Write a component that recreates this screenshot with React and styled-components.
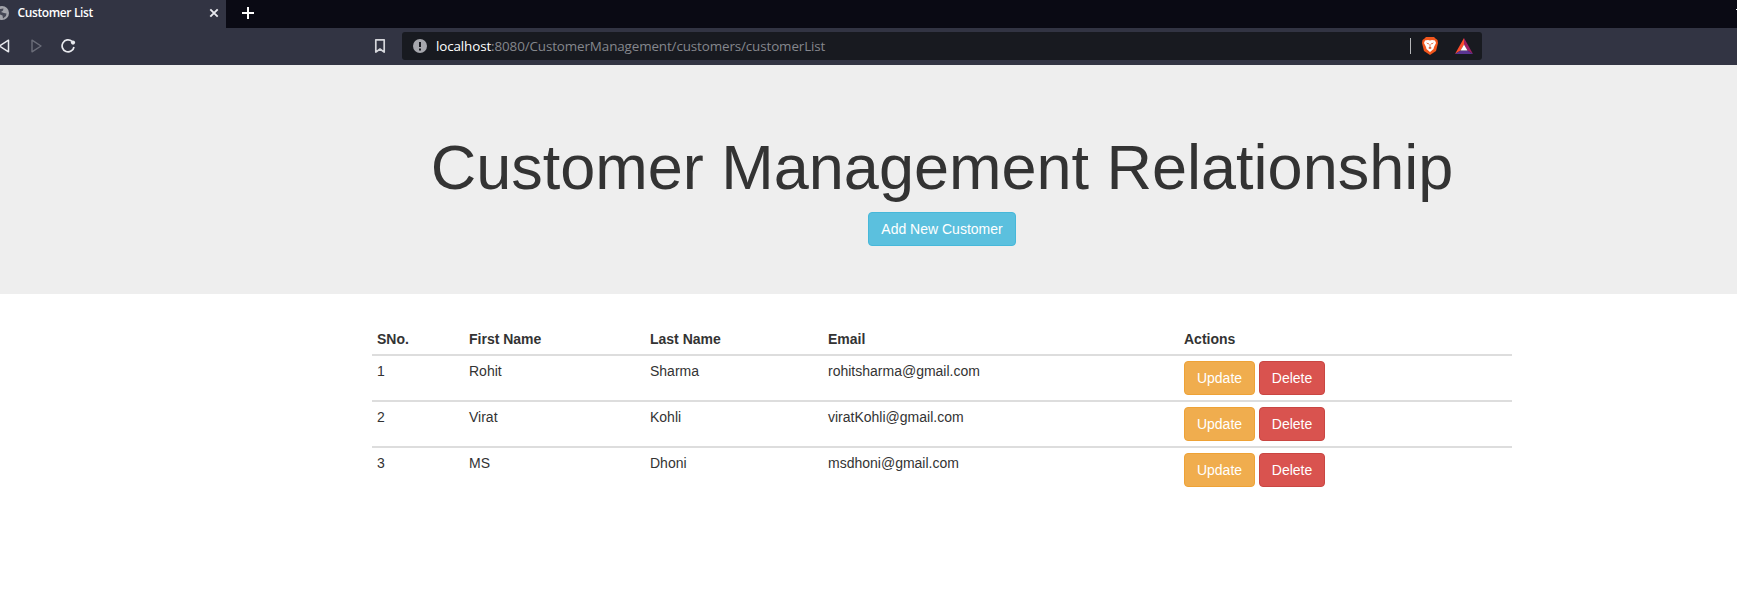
import React from "react";
import styled, { createGlobalStyle } from "styled-components";

const Global = createGlobalStyle`
  *, *::before, *::after { box-sizing: border-box; }
  body {
    margin: 0;
    background: #fff;
    color: #333;
    font: 14px/20px "Liberation Sans", Arial, sans-serif;
    overflow: hidden;
  }
`;

const Window = styled.div`
  height: 613px;
  overflow: hidden;
`;

const TabStrip = styled.div`
  display: flex;
  height: 28px;
  background: #0a0a14;
`;

const Tab = styled.div`
  display: flex;
  align-items: center;
  width: 226px;
  padding: 0 7px 2px 0;
  background: #323443;
  color: #fff;
  font: 600 12px/16px "Open Sans", "Noto Sans", sans-serif;
`;

const TabTitle = styled.span`
  flex: 1;
  margin-left: 8.5px;
  letter-spacing: -0.38px;
  white-space: nowrap;
`;

const StripSpacer = styled.div`
  flex: 1;
`;

const NewTab = styled.div`
  padding: 7px 0 0 16px;
  line-height: 0;
`;

const WindowControl = styled.div`
  width: 1px;
  height: 1px;
  margin-top: 9px;
  background: #fff;
`;

const Toolbar = styled.div`
  display: flex;
  align-items: center;
  height: 37px;
  padding-bottom: 1px;
  background: #323443;
`;

const NavButtons = styled.div`
  display: flex;
  align-items: center;
  width: 372px;
`;

const NavIcon = styled.svg`
  flex: none;
  margin-right: ${(p) => p.$gap || 0}px;
  color: ${(p) => p.$color || "#e8e9ee"};
`;

const AddressBar = styled.div`
  display: flex;
  align-items: center;
  width: 1080px;
  height: 28px;
  margin-left: 14px;
  padding: 0 9px 0 11px;
  border-radius: 3px;
  background: #181a20;
`;

const Url = styled.div`
  flex: 1;
  margin-left: 9px;
  color: #85878d;
  font: 13.4px/20px "Open Sans", "Noto Sans", sans-serif;
  letter-spacing: -0.11px;
`;

const Host = styled.span`
  color: #fff;
`;

const Divider = styled.div`
  width: 1px;
  height: 16px;
  margin-right: 11px;
  background: #b5b6b9;
`;

const Jumbotron = styled.header`
  height: 229px;
  padding: 48px 0 48px 372px;
  background: #eee;
`;

const Hero = styled.div`
  width: 1140px;
  text-align: center;
`;

const Title = styled.h1`
  margin: 20px 0 10px;
  font-size: 63px;
  font-weight: 500;
  line-height: 69px;
  white-space: nowrap;
`;

const tones = {
  info: ["#5bc0de", "#46b8da"],
  warning: ["#f0ad4e", "#eea236"],
  danger: ["#d9534f", "#c94642"],
};

const Button = styled.button`
  display: inline-block;
  height: 34px;
  padding: 6px 12px;
  border: 1px solid ${(p) => tones[p.$tone][1]};
  border-radius: 4px;
  background: ${(p) => tones[p.$tone][0]};
  color: #fff;
  font: inherit;
  vertical-align: middle;
`;

const RowButton = styled(Button)`
  width: ${(p) => p.$width}px;
  padding: 6px 0;
`;

const Content = styled.main`
  padding: 30px 0 0 372px;
`;

const Table = styled.table`
  width: 1140px;
  table-layout: fixed;
  border-spacing: 0;
  border-collapse: separate;
`;

const Col = styled.col`
  width: ${(p) => p.$width}px;
`;

const HeadCell = styled.th`
  padding: 5px;
  border-bottom: 2px solid #ddd;
  text-align: left;
`;

const Row = styled.tr`
  &:not(:last-child) > td { border-bottom: 2px solid #ddd; }
`;

const Cell = styled.td`
  padding: 5px;
  vertical-align: top;
`;

const Actions = styled.div`
  display: flex;
  gap: 4px;
`;

const customers = [
  { first: "Rohit", last: "Sharma", email: "rohitsharma@gmail.com" },
  { first: "Virat", last: "Kohli", email: "viratKohli@gmail.com" },
  { first: "MS", last: "Dhoni", email: "msdhoni@gmail.com" },
];

const columns = [
  ["SNo.", 92],
  ["First Name", 181],
  ["Last Name", 178],
  ["Email", 356],
  ["Actions", 333],
];

export default function App() {
  return (
    <Window>
      <Global />
      <TabStrip>
        <Tab>
          <NavIcon width="9" height="14" viewBox="5 0 9 14">
            <circle cx="7" cy="7" r="7" fill="#a2a3aa" />
            <path d="M4 3 8.500 2.500 8 4.500 6 6 9 7 11.500 7.500 11 10 8 12.500 7.500 9.500 4 8z" fill="#454755" />
          </NavIcon>
          <TabTitle>Customer List</TabTitle>
          <NavIcon width="10" height="10" viewBox="0 0 10 10" fill="none" stroke="currentColor" strokeWidth="1.9">
            <path d="M1.300 1.300 8.700 8.700M8.700 1.300 1.300 8.700" />
          </NavIcon>
        </Tab>
        <NewTab>
          <NavIcon $color="#fff" width="12" height="12" viewBox="0 0 12 12" fill="none" stroke="currentColor" strokeWidth="2">
            <path d="M6 0V12M0 6H12" />
          </NavIcon>
        </NewTab>
        <StripSpacer />
        <WindowControl />
      </TabStrip>
      <Toolbar>
        <NavButtons>
          <NavIcon $gap={21} width="10" height="14" viewBox="2 0 10 14" fill="none" stroke="currentColor" strokeWidth="1.5" strokeLinejoin="round">
            <path d="M10.500 1.200V12.800L1.500 7z" />
          </NavIcon>
          <NavIcon $gap={19} $color="#6b6d79" width="11" height="14" viewBox="0 0 11 14" fill="none" stroke="currentColor" strokeWidth="1.4" strokeLinejoin="round">
            <path d="M1 1.200V12.800L10 7z" />
          </NavIcon>
          <NavIcon width="15" height="14" viewBox="0 0 15 14" fill="none" stroke="currentColor" strokeWidth="1.7">
            <path d="M11 2.300A6 6 0 1 0 13 8" />
            <circle cx="12" cy="3.600" r="2.100" fill="currentColor" stroke="none" />
          </NavIcon>
        </NavButtons>
        <NavIcon $color="#d5d6db" width="16" height="16" viewBox="0 0 16 16" fill="none" stroke="currentColor" strokeWidth="1.700" strokeLinejoin="round">
          <path d="M3.800 1.800h8.400v12.300L8 11 3.800 14.100z" />
        </NavIcon>
        <AddressBar>
          <svg width="14" height="14" viewBox="0 0 14 14">
            <circle cx="7" cy="7" r="7" fill="#a6a7ad" />
            <path d="M6 3h2v5H6zM6 9.500h2v2H6z" fill="#181a20" />
          </svg>
          <Url><Host>localhost</Host>:8080/CustomerManagement/customers/customerList</Url>
          <Divider />
          <NavIcon $gap={17} width="16" height="18" viewBox="0 0 16 18">
            <path d="M4 0h8l1.500 1.500L15.500 3 16 6l-2 8-6 4-6-4L0 6l.5-3L2.500 1.500z" fill="#f1561d" />
            <path d="M3 3.500 6 3l2 .5L10 3l3 .5L14 6l-2 4-.5 2-3.500 3L4.500 12 4 10 2 6z" fill="#fff" />
            <path d="M4 5.500 7 6.500 6.300 7.500zM12 5.500 9 6.500l.7 1zM7.600 7h.8v3L9.800 11 8 12l-1.800-1 1.400-1z" fill="#e0501d" />
          </NavIcon>
          <NavIcon width="18" height="16" viewBox="0 0 18 16">
            <path d="M9 0 0 16 5.500 12.500 9 6.500z" fill="#ff4d2b" />
            <path d="M9 0 18 16 12.500 12.500 9 6.500z" fill="#9e1f63" />
            <path d="M0 16H18L12.500 12.500H5.500z" fill="#5b3591" />
            <path d="M9 6.500 12.500 12.500H5.500z" fill="#fff" />
          </NavIcon>
        </AddressBar>
      </Toolbar>
      <Jumbotron>
        <Hero>
          <Title>Customer Management Relationship</Title>
          <Button $tone="info">Add New Customer</Button>
        </Hero>
      </Jumbotron>
      <Content>
        <Table>
          <colgroup>
            {columns.map(([name, width]) => <Col key={name} $width={width} />)}
          </colgroup>
          <thead>
            <tr>{columns.map(([name]) => <HeadCell key={name}>{name}</HeadCell>)}</tr>
          </thead>
          <tbody>
            {customers.map((c, i) => (
              <Row key={c.email}>
                <Cell>{i + 1}</Cell>
                <Cell>{c.first}</Cell>
                <Cell>{c.last}</Cell>
                <Cell>{c.email}</Cell>
                <Cell>
                  <Actions>
                    <RowButton $tone="warning" $width={71}>Update</RowButton>
                    <RowButton $tone="danger" $width={66}>Delete</RowButton>
                  </Actions>
                </Cell>
              </Row>
            ))}
          </tbody>
        </Table>
      </Content>
    </Window>
  );
}
